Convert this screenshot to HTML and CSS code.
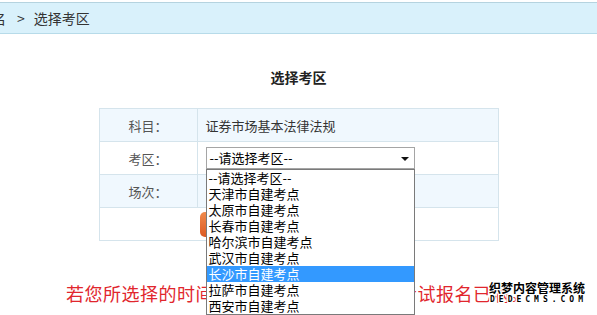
FILE: index.html
```html
<!DOCTYPE html>
<html>
<head>
  <meta charset="UTF-8">
  <title>选择考区</title>
  <link rel="stylesheet" href="styles.css">
</head>
<body>
  <div class="crumb">
    <span class="crumb-cut">报名</span><span class="crumb-sep">&gt;</span>选择考区
  </div>

  <h2 class="title">选择考区</h2>

  <table class="exam-table">
    <tr class="row-alt">
      <td class="label">科目：</td>
      <td class="value">证券市场基本法律法规</td>
    </tr>
    <tr>
      <td class="label">考区：</td>
      <td class="value">
        <div class="select-box">
          <div class="select-current">--请选择考区--<span class="select-arrow"></span></div>
          <ul class="select-list">
            <li>--请选择考区--</li>
            <li>天津市自建考点</li>
            <li>太原市自建考点</li>
            <li>长春市自建考点</li>
            <li>哈尔滨市自建考点</li>
            <li>武汉市自建考点</li>
            <li class="active">长沙市自建考点</li>
            <li>拉萨市自建考点</li>
            <li>西安市自建考点</li>
          </ul>
        </div>
      </td>
    </tr>
    <tr class="row-alt">
      <td class="label">场次：</td>
      <td class="value"></td>
    </tr>
    <tr>
      <td colspan="2" class="actions">
        <button class="btn-submit" type="button">确 定</button>
      </td>
    </tr>
  </table>

  <p class="notice">若您所选择的时间没有可选场次，说明该考试报名已满。</p>

  <div class="watermark">
    <div class="wm-cn">织梦内容管理系统</div>
    <div class="wm-en">DEDECMS.COM</div>
  </div>
</body>
</html>
```

FILE: styles.css
```css
    body {
      margin: 0;
      font-family: "Noto Sans CJK SC", "Liberation Sans", sans-serif;
      background-color: #fff;
      color: #333;
      position: relative;
      height: 315px;
      overflow: hidden;
    }

    .crumb {
      margin-top: 2px;
      height: 30px;
      line-height: 30px;
      background-color: #d9f1fb;
      border-top: 1px solid #b5d3df;
      border-bottom: 1px solid #b7dbe9;
      font-size: 14px;
      color: #333;
      white-space: nowrap;
    }

    .crumb-cut {
      margin-left: -22px;
    }

    .crumb-sep {
      margin: 0 9px 0 11px;
    }

    .title {
      margin: 33px 0 21px;
      text-align: center;
      font-size: 14px;
      line-height: 20px;
      font-weight: bold;
      color: #222;
    }

    .exam-table {
      width: 400px;
      margin: 0 auto;
      border-collapse: collapse;
      font-size: 13px;
    }

    .exam-table tr {
      height: 33px;
    }

    .exam-table td {
      border: 1px solid #d5e4ec;
      padding: 0;
    }

    .row-alt {
      background-color: #f0f8fe;
    }

    .label {
      width: 97px;
      text-align: center;
      color: #555;
    }

    .value {
      padding-left: 8px !important;
      color: #333;
    }

    .select-box {
      position: relative;
      width: 209px;
    }

    .select-current {
      height: 20px;
      line-height: 20px;
      border: 1px solid #a5a5a5;
      background-color: #fff;
      padding-left: 3px;
      color: #000;
      font-size: 13px;
      position: relative;
    }

    .select-arrow {
      position: absolute;
      right: 5px;
      top: 9px;
      border-left: 4px solid transparent;
      border-right: 4px solid transparent;
      border-top: 4px solid #111;
    }

    .select-list {
      position: absolute;
      top: 100%;
      left: 0;
      width: 207px;
      margin: 0;
      padding: 0;
      list-style: none;
      background-color: #fff;
      border: 1px solid #7a7a7a;
      z-index: 2;
    }

    .select-list li {
      height: 16px;
      line-height: 16px;
      padding-left: 2px;
      color: #000;
      font-size: 13px;
      white-space: nowrap;
    }

    .select-list li.active {
      background-color: #3399ff;
      color: #fff;
    }

    .actions {
      padding-left: 100px !important;
    }

    .btn-submit {
      display: block;
      width: 110px;
      height: 25px;
      margin-top: 1px;
      border: none;
      border-radius: 5px;
      background: linear-gradient(#f08a4c, #dc5a22);
      color: #fff;
      font-size: 13px;
      font-family: inherit;
    }

    .notice {
      margin: 40px 0 0;
      padding-left: 66px;
      font-size: 18px;
      line-height: 24px;
      letter-spacing: 0.5px;
      color: #e1262d;
      white-space: nowrap;
    }

    .watermark {
      position: absolute;
      left: 489px;
      top: 280px;
      color: #000;
      font-weight: bold;
      text-shadow: -1px 0 #fff, 1px 0 #fff, 0 -1px #fff, 0 1px #fff,
                   1px 1px #fff, -1px -1px #fff, 1px -1px #fff, -1px 1px #fff;
    }

    .wm-cn {
      font-size: 12px;
      line-height: 15px;
    }

    .wm-en {
      font-family: "DejaVu Sans Mono", monospace;
      font-size: 8px;
      line-height: 10px;
      letter-spacing: 4px;
      margin-left: 1px;
    }
```
